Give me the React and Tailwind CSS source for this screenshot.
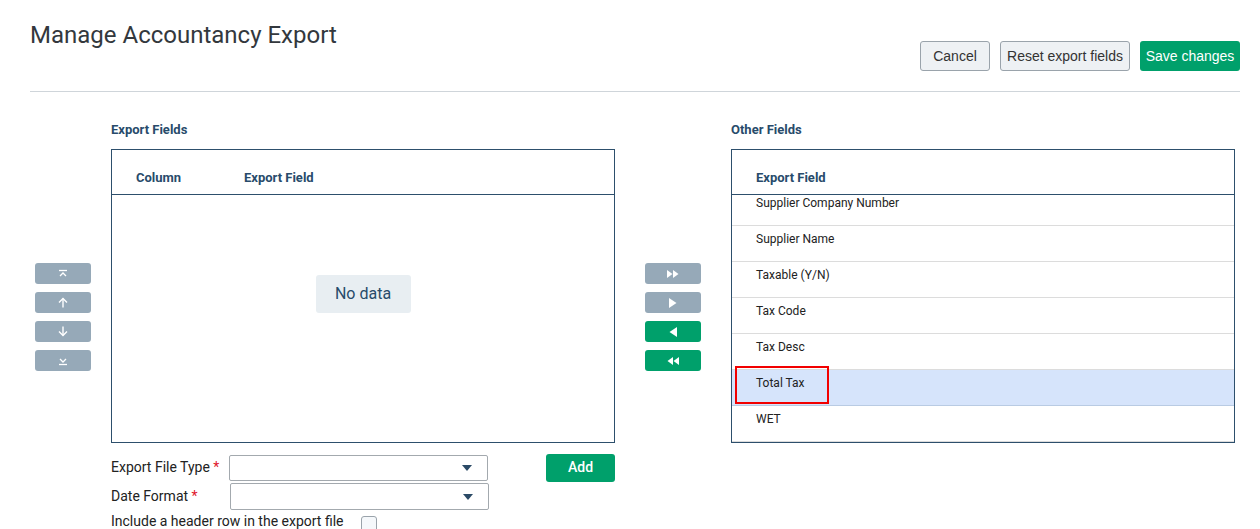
import React from "react";

const font = { fontFamily: "Roboto, 'Liberation Sans', sans-serif" };

function TopIcon() {
  return (
    <svg width="10" height="10" viewBox="0 0 10 10" fill="none" stroke="white" strokeWidth="1.3">
      <path d="M1 1.5h8" />
      <path d="M2 7l3-3 3 3" />
    </svg>
  );
}
function UpIcon() {
  return (
    <svg width="10" height="11" viewBox="0 0 10 11" fill="none" stroke="white" strokeWidth="1.4">
      <path d="M5 10.5V1.5" />
      <path d="M1 5.5l4-4 4 4" />
    </svg>
  );
}
function DownIcon() {
  return (
    <svg width="10" height="11" viewBox="0 0 10 11" fill="none" stroke="white" strokeWidth="1.4">
      <path d="M5 0.5v9" />
      <path d="M1 5.5l4 4 4-4" />
    </svg>
  );
}
function BottomIcon() {
  return (
    <svg width="10" height="10" viewBox="0 0 10 10" fill="none" stroke="white" strokeWidth="1.3">
      <path d="M2 3l3 3 3-3" />
      <path d="M1 8.5h8" />
    </svg>
  );
}
function FwdAll() {
  return (
    <svg width="12" height="8" viewBox="0 0 12 8" fill="white">
      <path d="M0 0l5.5 4L0 8z" />
      <path d="M6 0l5.5 4L6 8z" />
    </svg>
  );
}
function Fwd() {
  return (
    <svg width="8" height="10" viewBox="0 0 8 10" fill="white">
      <path d="M0 0l7.5 5L0 10z" />
    </svg>
  );
}
function Back() {
  return (
    <svg width="8" height="10" viewBox="0 0 8 10" fill="white">
      <path d="M8 0L0.5 5 8 10z" />
    </svg>
  );
}
function BackAll() {
  return (
    <svg width="12" height="8" viewBox="0 0 12 8" fill="white">
      <path d="M6 0L0.5 4 6 8z" />
      <path d="M12 0L6.5 4 12 8z" />
    </svg>
  );
}

function Caret() {
  return (
    <svg width="10" height="6" viewBox="0 0 10 6" fill="#2b4a66">
      <path d="M0 0h10L5 6z" />
    </svg>
  );
}

const otherFields = [
  "Tax Code",
  "Tax Desc",
  "Total Tax",
  "WET",
];

export default function App() {
  return (
    <div className="bg-white w-[1260px] h-[529px] overflow-hidden text-[#222]" style={font}>
      {/* header */}
      <div className="ml-[30px] mr-[20px] h-[92px] border-b border-[#cfd5da] flex justify-between">
        <h1 className="pt-[19px] text-[24px] leading-[32px] text-[#33383d] font-normal">
          Manage Accountancy Export
        </h1>
        <div className="flex gap-[10px] pt-[41px]" style={{ fontFamily: "'Liberation Sans', Arial, sans-serif" }}>
          <button className="w-[70px] h-[30px] bg-[#eef1f4] border border-[#9aa3ab] rounded-[3px] text-[14px] text-[#333]">
            Cancel
          </button>
          <button className="w-[130px] h-[30px] bg-[#eef1f4] border border-[#9aa3ab] rounded-[3px] text-[14px] text-[#333]">
            Reset export fields
          </button>
          <button className="w-[100px] h-[30px] bg-[#00a06b] rounded-[3px] text-[14px] text-white">
            Save changes
          </button>
        </div>
      </div>

      {/* main */}
      <div className="flex pt-[29px] pl-[35px]">
        {/* order buttons */}
        <div className="w-[56px] pt-[142px] flex flex-col gap-[8px]">
          {[TopIcon, UpIcon, DownIcon, BottomIcon].map((Icon, i) => (
            <button key={i} className="h-[21px] bg-[#96a9b8] rounded-[3px] flex items-center justify-center">
              <Icon />
            </button>
          ))}
        </div>

        {/* export fields */}
        <div className="ml-[20px] w-[504px]">
          <div className="text-[13px] leading-[18px] font-bold text-[#284b6b] mb-[10px]">Export Fields</div>
          <div className="h-[294px] border border-[#2d4f6c] flex flex-col">
            <div className="h-[45px] border-b border-[#2d4f6c] flex items-end pb-[7px] pl-[24px] text-[13px] font-bold text-[#284b6b]">
              <div className="w-[108px]">Column</div>
              <div>Export Field</div>
            </div>
            <div className="flex justify-center pt-[80px]">
              <div className="w-[95px] h-[38px] bg-[#e8eef2] rounded-[3px] flex items-center justify-center text-[16px] text-[#274b6a]">
                No data
              </div>
            </div>
          </div>

          {/* form */}
          <div className="mt-[10px] text-[14px] text-[#222]">
            <div className="flex items-center h-[29px]">
              <div className="w-[118px]">
                Export File Type <span className="text-[#e0162b]">*</span>
              </div>
              <div className="w-[259px] h-[26px] border border-[#a3a9ae] rounded-[2px] flex items-center justify-end pr-[15px]">
                <Caret />
              </div>
              <button className="ml-auto w-[69px] h-[28px] bg-[#00a06b] rounded-[3px] text-white text-[14px] font-medium">
                Add
              </button>
            </div>
            <div className="flex items-center h-[29px]">
              <div className="w-[119px]">
                Date Format <span className="text-[#e0162b]">*</span>
              </div>
              <div className="w-[259px] h-[27px] border border-[#a3a9ae] rounded-[2px] flex items-center justify-end pr-[15px]">
                <Caret />
              </div>
            </div>
            <div className="flex items-start h-[20px] mt-[1px]">
              <span className="leading-[18px]">Include a header row in the export file</span>
              <span className="ml-[18px] w-[16px] h-[16px] border border-[#9aa3ab] rounded-[3px] bg-[#f5f8fb] mt-[4px]" />
            </div>
          </div>
        </div>

        {/* move buttons */}
        <div className="ml-[30px] w-[56px] pt-[142px] flex flex-col gap-[8px]">
          <button className="h-[21px] bg-[#96a9b8] rounded-[3px] flex items-center justify-center"><FwdAll /></button>
          <button className="h-[21px] bg-[#96a9b8] rounded-[3px] flex items-center justify-center"><Fwd /></button>
          <button className="h-[21px] bg-[#00a06b] rounded-[3px] flex items-center justify-center"><Back /></button>
          <button className="h-[21px] bg-[#00a06b] rounded-[3px] flex items-center justify-center"><BackAll /></button>
        </div>

        {/* other fields */}
        <div className="ml-[30px] w-[504px]">
          <div className="text-[13px] leading-[18px] font-bold text-[#284b6b] mb-[10px]">Other Fields</div>
          <div className="h-[294px] border border-[#2d4f6c] flex flex-col">
            <div className="h-[45px] shrink-0 border-b border-[#2d4f6c] flex items-end pb-[7px] pl-[24px] text-[13px] font-bold text-[#284b6b]">
              Export Field
            </div>
            <div className="flex-1 overflow-hidden text-[12px] leading-[14px] text-[#222]">
              <div className="-mt-[5px] h-[36px] border-b border-[#dcdcdc] pl-[24px] pt-[6px]">Supplier Company Number</div>
              <div className="h-[36px] border-b border-[#dcdcdc] pl-[24px] pt-[6px]">Supplier Name</div>
              <div className="h-[36px] border-b border-[#dcdcdc] pl-[24px] pt-[6px]">Taxable (Y/N)</div>
              {otherFields.map((f) => (
                <div
                  key={f}
                  className={
                    f === "Total Tax"
                      ? "relative h-[36px] border-b border-[#b9cbe3] bg-[#d6e4fb] pl-[24px] pt-[6px]"
                      : "h-[36px] border-b border-[#dcdcdc] pl-[24px] pt-[6px]"
                  }
                >
                  {f}
                  {f === "Total Tax" && (
                    <span className="absolute left-[3px] top-[-4px] w-[94px] h-[38px] border-2 border-[#f20000]" />
                  )}
                </div>
              ))}
            </div>
          </div>
        </div>
      </div>
    </div>
  );
}
